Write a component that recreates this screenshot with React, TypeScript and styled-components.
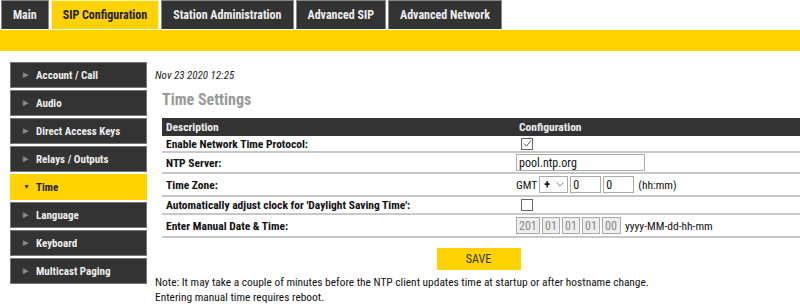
import React, { useState } from "react";
import styled, { createGlobalStyle } from "styled-components";

const GlobalStyle = createGlobalStyle`
  body {
    margin: 0;
    background: #fff;
    font-family: "Roboto Condensed", Roboto, sans-serif;
  }
`;

const YELLOW = "#ffd200";
const DARK = "#333333";

const Page = styled.div`
  width: 800px;
  height: 308px;
  overflow: hidden;
`;

const TabBar = styled.div`
  display: flex;
  gap: 2px;
  padding-left: 1px;
  height: 29px;
`;

const Tab = styled.div<{ $active?: boolean }>`
  display: flex;
  align-items: center;
  padding: 0 11px;
  background: ${(p) => (p.$active ? YELLOW : DARK)};
  color: ${(p) => (p.$active ? "#222" : "#eee")};
  border: 1px solid ${(p) => (p.$active ? "#fff3b0" : "#888")};
  border-bottom: none;
  font-size: 12px;
  font-weight: bold;
`;

const Band = styled.div`
  height: 21px;
  margin-top: 1px;
  background: ${YELLOW};
`;

const Body = styled.div`
  display: flex;
`;

const Sidebar = styled.div`
  display: flex;
  flex-direction: column;
  gap: 2px;
  margin: 11px 0 0 10px;
  width: 137px;
`;

const NavItem = styled.div<{ $active?: boolean }>`
  display: flex;
  align-items: center;
  height: 26px;
  box-sizing: border-box;
  padding-left: 12px;
  background: ${(p) => (p.$active ? YELLOW : DARK)};
  color: ${(p) => (p.$active ? "#222" : "#eee")};
  border: 1px solid ${(p) => (p.$active ? YELLOW : "#777")};
  font-size: 11px;
  font-weight: bold;
`;

const Arrow = styled.span<{ $active?: boolean }>`
  width: 13px;
  font-size: 7px;
  color: ${(p) => (p.$active ? "#333" : "#888")};
`;

const Main = styled.div`
  flex: 1;
  padding-left: 8px;
  display: flex;
  flex-direction: column;
`;

const DateLine = styled.div`
  margin-top: 18px;
  font-size: 11px;
  font-style: italic;
  color: #222;
`;

const Title = styled.div`
  margin: 8px 0 0 7px;
  font-size: 16px;
  font-weight: bold;
  color: #999;
`;

const Table = styled.table`
  margin: 9px 0 0 7px;
  width: 638px;
  border-collapse: collapse;
  font-size: 11.5px;
`;

const HeadCell = styled.th<{ $pad: number }>`
  background: ${DARK};
  color: #eee;
  text-align: left;
  font-weight: bold;
  height: 18px;
  padding: 0 0 0 ${(p) => p.$pad}px;
`;

const Row = styled.tr`
  border-bottom: 2px solid #c8c8c8;
`;

const Label = styled.td`
  width: 350px;
  padding: 0 0 0 4px;
  font-weight: bold;
  color: #111;
`;

const Cell = styled.td<{ $h: number }>`
  height: ${(p) => p.$h}px;
  padding: 0;
  color: #111;
`;

const Controls = styled.div`
  display: flex;
  align-items: center;
  gap: 2px;
`;

const Check = styled.span`
  display: inline-flex;
  align-items: center;
  justify-content: center;
  width: 12px;
  height: 12px;
  margin-left: 5px;
  border: 1px solid #666;
  box-sizing: border-box;
  background: #fff;
`;

const TextBox = styled.input<{ $w: number; $disabled?: boolean }>`
  width: ${(p) => p.$w}px;
  height: 17px;
  box-sizing: border-box;
  padding: 0 1px 0 2px;
  margin: 0;
  border: 1px solid #aaa;
  background: ${(p) => (p.$disabled ? "#eee" : "#fff")};
  color: ${(p) => (p.$disabled ? "#888" : "#111")};
  font-family: inherit;
  font-size: 12px;
`;

const Select = styled.div`
  display: flex;
  align-items: center;
  justify-content: space-between;
  width: 29px;
  height: 17px;
  box-sizing: border-box;
  padding: 0 3px 0 4px;
  border: 1px solid #aaa;
  font-size: 12px;
  font-weight: bold;
`;

const Hint = styled.span<{ $gap?: number }>`
  font-size: 11.5px;
  margin: 0 ${(p) => p.$gap ?? 0}px 0 ${(p) => p.$gap ?? 2}px;
`;

const SaveRow = styled.div`
  display: flex;
  justify-content: center;
  padding-left: 2px;
  margin-top: 10px;
`;

const SaveButton = styled.button`
  width: 84px;
  height: 22px;
  border: none;
  background: ${YELLOW};
  color: #333;
  font-family: inherit;
  font-size: 12px;
`;

const Note = styled.div`
  margin-top: 5px;
  font-size: 11.4px;
  line-height: 15px;
  color: #111;
`;

const menu = [
  "Account / Call",
  "Audio",
  "Direct Access Keys",
  "Relays / Outputs",
  "Time",
  "Language",
  "Keyboard",
  "Multicast Paging",
];

const tabs = ["Main", "SIP Configuration", "Station Administration", "Advanced SIP", "Advanced Network"];

const CheckMark = () => (
  <svg width="9" height="9" viewBox="0 0 9 9">
    <path d="M1 4.5 L3.5 7 L8 1.5" fill="none" stroke="#555" strokeWidth="1" />
  </svg>
);

const Chevron = () => (
  <svg width="8" height="5" viewBox="0 0 8 5">
    <path d="M0.5 0.5 L4 4 L7.5 0.5" fill="none" stroke="#888" strokeWidth="1" />
  </svg>
);

const App = () => {
  const [ntp, setNtp] = useState("pool.ntp.org");
  return (
    <Page>
      <GlobalStyle />
      <TabBar>
        {tabs.map((t) => (
          <Tab key={t} $active={t === "SIP Configuration"}>{t}</Tab>
        ))}
      </TabBar>
      <Band />
      <Body>
        <Sidebar>
          {menu.map((m) => (
            <NavItem key={m} $active={m === "Time"}>
              <Arrow $active={m === "Time"}>{m === "Time" ? "▼" : "▶"}</Arrow>
              {m}
            </NavItem>
          ))}
        </Sidebar>
        <Main>
          <DateLine>Nov 23 2020 12:25</DateLine>
          <Title>Time Settings</Title>
          <Table>
            <tbody>
              <tr>
                <HeadCell $pad={4}>Description</HeadCell>
                <HeadCell $pad={3}>Configuration</HeadCell>
              </tr>
              <Row>
                <Label>Enable Network Time Protocol:</Label>
                <Cell $h={15}>
                  <Controls>
                    <Check><CheckMark /></Check>
                  </Controls>
                </Cell>
              </Row>
              <Row>
                <Label>NTP Server:</Label>
                <Cell $h={19}>
                  <TextBox $w={129} value={ntp} onChange={(e) => setNtp(e.target.value)} />
                </Cell>
              </Row>
              <Row>
                <Label>Time Zone:</Label>
                <Cell $h={21}>
                  <Controls>
                    <Hint $gap={0}>GMT</Hint>
                    <Select>+<Chevron /></Select>
                    <TextBox $w={31} defaultValue="0" />
                    <TextBox $w={31} defaultValue="0" />
                    <Hint>(hh:mm)</Hint>
                  </Controls>
                </Cell>
              </Row>
              <Row>
                <Label>Automatically adjust clock for 'Daylight Saving Time':</Label>
                <Cell $h={16}>
                  <Controls>
                    <Check />
                  </Controls>
                </Cell>
              </Row>
              <Row>
                <Label>Enter Manual Date &amp; Time:</Label>
                <Cell $h={21}>
                  <Controls>
                    <TextBox $w={24} $disabled defaultValue="2015" />
                    <TextBox $w={18} $disabled defaultValue="01" />
                    <TextBox $w={18} $disabled defaultValue="01" />
                    <TextBox $w={18} $disabled defaultValue="01" />
                    <TextBox $w={19} $disabled defaultValue="00" />
                    <Hint>yyyy-MM-dd-hh-mm</Hint>
                  </Controls>
                </Cell>
              </Row>
            </tbody>
          </Table>
          <SaveRow>
            <SaveButton>SAVE</SaveButton>
          </SaveRow>
          <Note>
            Note: It may take a couple of minutes before the NTP client updates time at startup or after hostname change.
            <br />
            Entering manual time requires reboot.
          </Note>
        </Main>
      </Body>
    </Page>
  );
};

export default App;
